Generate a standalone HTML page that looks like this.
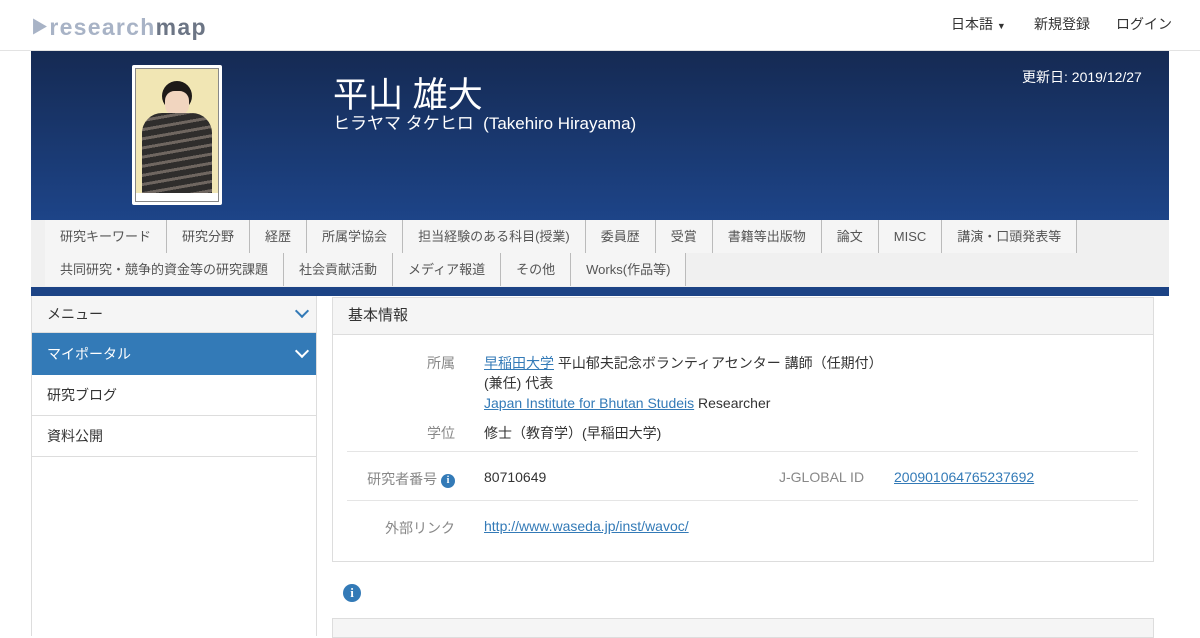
<!DOCTYPE html>
<html><head><meta charset="utf-8"><style>
*{box-sizing:border-box;margin:0;padding:0}
body{width:1200px;height:630px;overflow:hidden;background:#fff;font-family:"Liberation Sans","Noto Sans CJK JP",sans-serif;color:#333;font-size:14px;position:relative}
.abs{position:absolute}
a{color:#337ab7;text-decoration:underline}
.nav{top:0;left:0;width:1200px;height:51px;border-bottom:1px solid #e3e3e3}
.logo{left:31px;top:13px;font-size:23px;font-weight:bold;letter-spacing:1.3px;color:#a8b3c6}
.logo b{color:#6c7585}
.navr span{position:absolute;top:14px;font-size:14px;color:#333}
.banner{left:31px;top:51px;width:1138px;height:169px;background:linear-gradient(#152a53,#1d4488)}
.tabs{left:31px;top:220px;width:1138px;height:67px;background:#f0f0f0}
.row{position:absolute;left:14px;height:33px;display:flex;background:#f5f5f5}
.row span{font-size:13px;color:#555;padding:0 15px;line-height:33px;border-right:1px solid #bbb;height:33px}
.bar{left:31px;top:287px;width:1138px;height:9px;background:#1c4385}
.side{left:31px;top:296px;width:286px;height:340px;border-left:1px solid #ddd}
.si{position:absolute;left:0;width:285px;padding-left:15px;font-size:14px}
.chev{position:absolute;right:10px;top:12px;width:10px;height:10px;border-right:2px solid;border-bottom:2px solid;transform:rotate(45deg)}
.panel{left:332px;top:297px;width:822px;height:265px;border:1px solid #ddd}
.lab{position:absolute;color:#888;text-align:right;font-size:14px}
.val{position:absolute;font-size:14px;color:#333}
.info{display:inline-block;width:14px;height:14px;border-radius:50%;background:#337ab7;color:#fff;font-size:10px;font-weight:bold;text-align:center;line-height:14px;font-family:"Liberation Serif",serif;vertical-align:1px}
</style></head><body>
<div class="abs nav"></div>
<div class="abs logo"><span style="font-size:17px;vertical-align:2px">▶</span>research<b>map</b></div>
<div class="navr"><span style="left:951px">日本語 <span style="position:static;font-size:9px">▼</span></span><span style="left:1034px">新規登録</span><span style="left:1116px">ログイン</span></div>
<div class="abs banner"></div>
<div class="abs" style="left:132px;top:65px;width:90px;height:140px;background:#fff;border-radius:2px;padding:3px">
<div style="width:100%;height:100%;background:#f1e6b4;position:relative;overflow:hidden;border:1px solid #888">
<div class="abs" style="left:26px;top:12px;width:30px;height:30px;border-radius:50%;background:#1e1a18"></div>
<div class="abs" style="left:29px;top:22px;width:24px;height:24px;border-radius:40%;background:#f1d5bf"></div>
<div class="abs" style="left:6px;top:44px;width:70px;height:84px;border-radius:20px 20px 0 0;background:repeating-linear-gradient(170deg,#2f2d2c 0 6px,#6f6660 6px 9px)"></div>
<div class="abs" style="left:0;bottom:0;width:100%;height:8px;background:#fff"></div>
</div></div>
<div class="abs" style="left:333px;top:67px;font-size:35px;color:#fff">平山 雄大</div>
<div class="abs" style="left:333px;top:109px;font-size:17px;color:#fff">ヒラヤマ タケヒロ &nbsp;(Takehiro Hirayama)</div>
<div class="abs" style="left:1022px;top:67px;font-size:14px;color:#fff">更新日: 2019/12/27</div>
<div class="abs tabs">
<div class="row" style="top:0"><span>研究キーワード</span><span>研究分野</span><span>経歴</span><span>所属学協会</span><span>担当経験のある科目(授業)</span><span>委員歴</span><span>受賞</span><span>書籍等出版物</span><span>論文</span><span>MISC</span><span>講演・口頭発表等</span></div>
<div class="row" style="top:33px"><span>共同研究・競争的資金等の研究課題</span><span>社会貢献活動</span><span>メディア報道</span><span>その他</span><span>Works(作品等)</span></div>
</div>
<div class="abs bar"></div>
<div class="abs" style="left:316px;top:296px;height:190px;border-left:1px solid #ddd"></div>
<div class="abs side">
<div class="si" style="top:0;height:37px;line-height:36px;background:#f5f5f5;border-bottom:1px solid #ddd">メニュー<i class="chev" style="color:#337ab7;top:10px"></i></div>
<div class="si" style="top:37px;height:42px;line-height:42px;background:#337ab7;color:#fff">マイポータル<i class="chev" style="color:#fff;top:13px"></i></div>
<div class="si" style="top:79px;height:41px;line-height:40px;border-bottom:1px solid #ddd">研究ブログ</div>
<div class="si" style="top:120px;height:41px;line-height:40px;border-bottom:1px solid #ddd">資料公開</div>
</div>
<div class="abs" style="left:316px;top:296px;width:1px;height:340px;background:#ddd"></div>
<div class="abs panel">
<div class="abs" style="left:0;top:0;width:820px;height:37px;background:#f5f5f5;border-bottom:1px solid #ddd;padding-left:15px;line-height:36px;font-size:15px">基本情報</div>
<div class="lab" style="right:698px;top:55px">所属</div>
<div class="val" style="left:151px;top:55px;line-height:20px"><a>早稲田大学</a> 平山郁夫記念ボランティアセンター 講師（任期付）<br>(兼任) 代表<br><a>Japan Institute for Bhutan Studeis</a> Researcher</div>
<div class="lab" style="right:698px;top:125px">学位</div>
<div class="val" style="left:151px;top:125px">修士（教育学）(早稲田大学)</div>
<div class="abs" style="left:14px;top:153px;width:791px;border-top:1px solid #e5e5e5"></div>
<div class="lab" style="right:698px;top:171px">研究者番号 <span class="info">i</span></div>
<div class="val" style="left:151px;top:171px">80710649</div>
<div class="lab" style="left:446px;top:171px">J-GLOBAL ID</div>
<div class="val" style="left:561px;top:171px"><a>200901064765237692</a></div>
<div class="abs" style="left:14px;top:202px;width:791px;border-top:1px solid #e5e5e5"></div>
<div class="lab" style="right:698px;top:220px">外部リンク</div>
<div class="val" style="left:151px;top:220px"><a>http://www.waseda.jp/inst/wavoc/</a></div>
</div>
<div class="abs" style="left:343px;top:584px"><span class="info" style="width:18px;height:18px;line-height:18px;font-size:13px">i</span></div>
<div class="abs" style="left:332px;top:618px;width:822px;height:20px;background:#f5f5f5;border:1px solid #ddd"></div>
</body></html>
